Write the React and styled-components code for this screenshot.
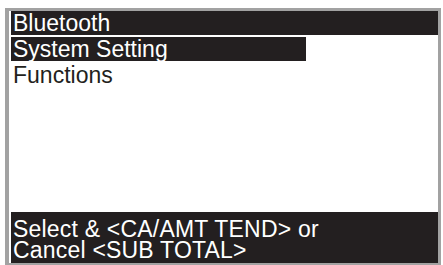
import React from "react";
import styled, { createGlobalStyle } from "styled-components";

const GlobalStyle = createGlobalStyle`
  html, body {
    margin: 0;
    padding: 0;
    background: #ffffff;
  }
  body {
    font-family: "Liberation Sans", Arial, sans-serif;
  }
`;

const Page = styled.div`
  padding: 8px 0 0 5px;
`;

const Screen = styled.div`
  box-sizing: border-box;
  width: 436px;
  height: 258px;
  border: 3px solid #a2a2a2;
  border-left-width: 4px;
  padding: 0 0 0 2px;
  display: flex;
  flex-direction: column;
  background: #ffffff;
`;

const Menu = styled.div`
  display: flex;
  flex-direction: column;
  gap: 2px;
  flex: 1;
`;

const Item = styled.div`
  box-sizing: border-box;
  height: 24px;
  width: ${(p) => p.$width || "100%"};
  padding-left: 2px;
  font-size: 23px;
  line-height: 24px;
  white-space: nowrap;
  background: ${(p) => (p.$active ? "#231f20" : "transparent")};
  color: ${(p) => (p.$active ? "#ffffff" : "#231f20")};
`;

const Footer = styled.div`
  box-sizing: border-box;
  height: 51px;
  padding: 7px 0 0 2px;
  background: #231f20;
  color: #ffffff;
  font-size: 23px;
  line-height: 21px;
  letter-spacing: 0.2px;
  white-space: nowrap;
`;

const FooterLine = styled.div`
  height: 21px;
`;

const items = [
  { label: "Bluetooth", active: true },
  { label: "System Setting", active: true, width: "295px" },
  { label: "Functions" },
];

export default function App() {
  return (
    <Page>
      <GlobalStyle />
      <Screen>
        <Menu>
          {items.map((item) => (
            <Item key={item.label} $active={item.active} $width={item.width}>
              {item.label}
            </Item>
          ))}
        </Menu>
        <Footer>
          <FooterLine>Select &amp; &lt;CA/AMT TEND&gt; or</FooterLine>
          <FooterLine>Cancel &lt;SUB TOTAL&gt;</FooterLine>
        </Footer>
      </Screen>
    </Page>
  );
}
